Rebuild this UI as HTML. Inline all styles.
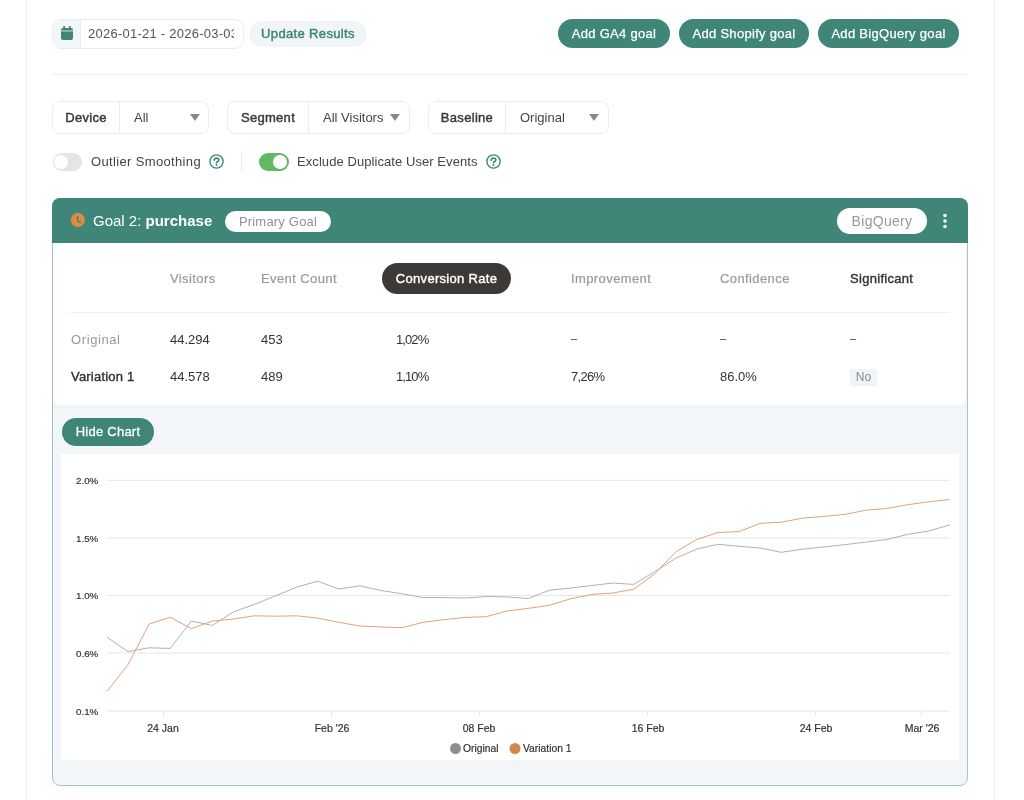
<!DOCTYPE html>
<html><head><meta charset="utf-8">
<style>
*{box-sizing:border-box;margin:0;padding:0}
html,body{width:1024px;height:800px;overflow:hidden;background:#fff;font-family:"Liberation Sans",sans-serif;color:#333}
.abs{position:absolute}
.frame{position:absolute;left:26px;top:-10px;width:969px;height:820px;border-left:1px solid #f0f0f0;border-right:1px solid #f0f0f0}
.dateg{left:52px;top:19px;width:192px;height:30px;border:1px solid #e9edf0;border-radius:9px;overflow:hidden;background:#fff}
.dateg .ic{position:absolute;left:0;top:0;width:28px;height:28px;background:#f3f6f9;border-right:1px solid #e9edf0}
.dateg .tx{position:absolute;left:35px;top:0;line-height:28px;font-size:13px;color:#555;white-space:nowrap;width:146px;overflow:hidden;letter-spacing:0.25px}
.upd{left:249px;top:21px;width:118px;height:26px;border-radius:13px;background:#f1f5f8;color:#3d8577;font-size:13px;-webkit-text-stroke:0.45px #3d8577;letter-spacing:0.35px;text-align:center;line-height:26px}
.btn{top:19px;height:29px;border-radius:15px;background:#3f8679;color:#fff;font-size:13px;text-align:center;line-height:29px;white-space:nowrap;letter-spacing:0.3px;-webkit-text-stroke:0.25px #fff}
.hr{left:52px;top:74px;width:916px;height:1px;background:#f1f1f1}
.sel{top:101px;height:33px;border:1px solid #eaecef;border-radius:8px}
.sel .lb{position:absolute;left:0;top:0;height:31px;line-height:31px;font-size:13px;-webkit-text-stroke:0.45px #3a3a3a;letter-spacing:0.3px;color:#3a3a3a;border-right:1px solid #eaecef;text-align:center}
.sel .vl{position:absolute;top:0;line-height:31px;font-size:13px;color:#444}
.sel .car{position:absolute;top:12px;width:0;height:0;border-left:5px solid transparent;border-right:5px solid transparent;border-top:7px solid #888}
.tog{top:153px;width:29.5px;height:17.5px;border-radius:9px}
.tog .k{position:absolute;top:1.75px;width:14px;height:14px;border-radius:7px;background:#fff}
.tl{top:153px;line-height:18px;font-size:13px;color:#444;white-space:nowrap}
.help{top:154px;width:15px;height:15px;border:1.5px solid #3f8679;border-radius:50%;color:#3f8679;font-size:10px;font-weight:bold;text-align:center;line-height:12px}
.card{left:52px;top:198px;width:916px;height:588px;border:1px solid #a3c8c1;border-radius:8px;background:#f3f6f9;overflow:hidden}
.hdr{left:52px;top:198px;width:916px;height:45px;background:#3f8679;border-radius:8px 8px 0 0}
.tbl{left:53px;top:243px;width:913px;height:162px;background:#fff;border-radius:0 0 8px 8px}
.th{top:271px;line-height:16px;font-size:13px;color:#999;white-space:nowrap;letter-spacing:0.4px;-webkit-text-stroke:0.2px #999}
.td{line-height:16px;font-size:13px;color:#333;white-space:nowrap}
.chart{left:61px;top:454px;width:898px;height:306px;background:#fff}
.yl{font-family:"Liberation Sans",sans-serif;font-size:9.8px;fill:#333;stroke:#333;stroke-width:0.2px}
.xl{font-family:"Liberation Sans",sans-serif;font-size:10.5px;fill:#333;stroke:#333;stroke-width:0.2px}
</style></head><body><div style="position:absolute;left:0;top:0;width:1024px;height:800px;will-change:transform">
<div class="frame"></div>

<div class="abs dateg"><div class="ic"><svg width="28" height="28" viewBox="1 0 28 28"><rect x="9" y="8" width="12" height="12" rx="2" fill="#3f8679"/><rect x="11.3" y="6" width="1.7" height="3" rx="0.6" fill="#3f8679"/><rect x="17" y="6" width="1.7" height="3" rx="0.6" fill="#3f8679"/><rect x="9" y="10.2" width="12" height="1.5" fill="#9cc3bb"/></svg></div><div class="tx">2026-01-21 - 2026-03-03</div></div>
<div class="abs upd">Update Results</div>
<div class="abs btn" style="left:558px;width:112px">Add GA4 goal</div>
<div class="abs btn" style="left:679px;width:130px">Add Shopify goal</div>
<div class="abs btn" style="left:818px;width:141px">Add BigQuery goal</div>
<div class="abs hr"></div>

<div class="abs sel" style="left:52px;width:157px"><div class="lb" style="width:67px">Device</div><div class="vl" style="left:81px">All</div><div class="car" style="left:137px"></div></div>
<div class="abs sel" style="left:227px;width:183px"><div class="lb" style="width:81px">Segment</div><div class="vl" style="left:95px">All Visitors</div><div class="car" style="left:162px"></div></div>
<div class="abs sel" style="left:428px;width:181px"><div class="lb" style="width:77px">Baseline</div><div class="vl" style="left:91px">Original</div><div class="car" style="left:160px"></div></div>

<div class="abs tog" style="left:52.5px;background:#e2e5e8"><div class="k" style="left:1.5px"></div></div>
<div class="abs tl" style="left:91px;letter-spacing:0.35px">Outlier Smoothing</div>
<svg class="abs" style="left:209.2px;top:153.5px" width="15" height="15" viewBox="0 0 15 15"><circle cx="7.5" cy="7.5" r="6.6" stroke="#3f8679" stroke-width="1.4" fill="none"/><path d="M5.2 6.1 Q5.4 4.2 7.5 4.2 Q9.8 4.2 9.8 6 Q9.8 7.3 7.5 8.2 V8.7" stroke="#3f8679" stroke-width="1.7" fill="none" stroke-linecap="round" stroke-linejoin="round"/><circle cx="7.5" cy="10.9" r="1" fill="#3f8679"/></svg>
<div class="abs" style="left:241px;top:151px;width:1px;height:21px;background:#eceef2"></div>
<div class="abs tog" style="left:259px;background:#62b865"><div class="k" style="left:14px"></div></div>
<div class="abs tl" style="left:297px;letter-spacing:0.07px">Exclude Duplicate User Events</div>
<svg class="abs" style="left:486.2px;top:153.5px" width="15" height="15" viewBox="0 0 15 15"><circle cx="7.5" cy="7.5" r="6.6" stroke="#3f8679" stroke-width="1.4" fill="none"/><path d="M5.2 6.1 Q5.4 4.2 7.5 4.2 Q9.8 4.2 9.8 6 Q9.8 7.3 7.5 8.2 V8.7" stroke="#3f8679" stroke-width="1.7" fill="none" stroke-linecap="round" stroke-linejoin="round"/><circle cx="7.5" cy="10.9" r="1" fill="#3f8679"/></svg>

<div class="abs card"></div>
<div class="abs hdr"></div>
<svg class="abs" style="left:70px;top:212px" width="16" height="16" viewBox="0 0 16 16"><circle cx="7.9" cy="8" r="7" fill="#e08b42"/><path d="M7.6 4.6 V8.8 L10.4 10.6" stroke="#3f8679" stroke-width="1.5" fill="none" stroke-linecap="round" stroke-linejoin="round"/></svg>
<div class="abs" style="left:93px;top:212px;line-height:18px;font-size:15px;color:#fff;white-space:nowrap">Goal 2: <b>purchase</b></div>
<div class="abs" style="left:225px;top:211.3px;width:106px;height:21.2px;border-radius:11px;background:#fff;color:#919191;font-size:13px;line-height:21.2px;text-align:center;letter-spacing:0.2px">Primary Goal</div>
<div class="abs" style="left:837px;top:208px;width:90px;height:26px;border-radius:13px;background:#fff;color:#999;font-size:14px;line-height:26px;text-align:center;letter-spacing:0.3px">BigQuery</div>
<svg class="abs" style="left:940px;top:212px" width="10" height="18"><circle cx="5" cy="3.5" r="1.8" fill="#fff"/><circle cx="5" cy="9" r="1.8" fill="#fff"/><circle cx="5" cy="14.5" r="1.8" fill="#fff"/></svg>

<div class="abs tbl"></div>
<div class="abs th" style="left:170px">Visitors</div>
<div class="abs th" style="left:261px">Event Count</div>
<div class="abs" style="left:382px;top:263px;width:129px;height:31px;border-radius:16px;background:#3d3937;color:#fff;font-size:13px;-webkit-text-stroke:0.4px #fff;letter-spacing:0.3px;text-align:center;line-height:31px">Conversion Rate</div>
<div class="abs th" style="left:571px">Improvement</div>
<div class="abs th" style="left:720px">Confidence</div>
<div class="abs th" style="left:850px;color:#333;-webkit-text-stroke:0.4px #333;letter-spacing:0.3px">Significant</div>
<div class="abs" style="left:70px;top:312px;width:880px;height:1px;background:#f0f0f0"></div>

<div class="abs td" style="left:71px;top:332px;color:#999;letter-spacing:0.6px">Original</div>
<div class="abs td" style="left:170px;top:332px">44.294</div>
<div class="abs td" style="left:261px;top:332px">453</div>
<div class="abs td" style="left:396px;top:332px;letter-spacing:-0.9px">1,02%</div>
<div class="abs td" style="left:571px;top:330px;font-size:11px">&#8211;</div>
<div class="abs td" style="left:720px;top:330px;font-size:11px">&#8211;</div>
<div class="abs td" style="left:850px;top:330px;font-size:11px">&#8211;</div>

<div class="abs td" style="left:71px;top:369px;-webkit-text-stroke:0.4px #333;letter-spacing:0.2px">Variation 1</div>
<div class="abs td" style="left:170px;top:369px">44.578</div>
<div class="abs td" style="left:261px;top:369px">489</div>
<div class="abs td" style="left:396px;top:369px;letter-spacing:-0.9px">1,10%</div>
<div class="abs td" style="left:571px;top:369px;letter-spacing:-0.7px">7,26%</div>
<div class="abs td" style="left:720px;top:369px">86.0%</div>
<div class="abs" style="left:850px;top:369px;width:27px;height:17px;background:#f1f4f7;color:#888;font-size:12px;line-height:17px;text-align:center">No</div>

<div class="abs" style="left:62px;top:418px;width:92px;height:28px;border-radius:14px;background:#3f8679;color:#fff;font-size:13px;line-height:28px;text-align:center;letter-spacing:0.25px;-webkit-text-stroke:0.3px #fff">Hide Chart</div>
<div class="abs chart"></div>

<svg class="abs" style="left:0;top:0" width="1024" height="800">
<g stroke="#e6e6e6" stroke-width="1">
<line x1="107" y1="480.3" x2="950" y2="480.3"/>
<line x1="107" y1="538" x2="950" y2="538"/>
<line x1="107" y1="595.5" x2="950" y2="595.5"/>
<line x1="107" y1="653" x2="950" y2="653"/>
<line x1="107" y1="711" x2="950" y2="711"/>
<line x1="163.5" y1="711" x2="163.5" y2="716"/>
<line x1="331.5" y1="711" x2="331.5" y2="716"/>
<line x1="479.5" y1="711" x2="479.5" y2="716"/>
<line x1="647.5" y1="711" x2="647.5" y2="716"/>
<line x1="815.5" y1="711" x2="815.5" y2="716"/>
<line x1="921.5" y1="711" x2="921.5" y2="716"/>
</g>
<g class="yl" text-anchor="start">
<text x="76" y="484">2.0%</text>
<text x="76" y="542">1.5%</text>
<text x="76" y="599">1.0%</text>
<text x="76" y="657">0.6%</text>
<text x="76" y="715">0.1%</text>
</g>
<g class="xl" text-anchor="middle">
<text x="163" y="732">24 Jan</text>
<text x="332" y="732">Feb '26</text>
<text x="479" y="732">08 Feb</text>
<text x="648" y="732">16 Feb</text>
<text x="816" y="732">24 Feb</text>
<text x="922" y="732">Mar '26</text>
</g>
<polyline fill="none" stroke="#b0b0b0" stroke-width="1" points="107.0,637.2 128.1,651.6 149.1,647.8 170.2,648.4 191.3,621.1 212.3,625.4 233.4,611.9 254.5,604.4 275.6,595.8 296.6,587.2 317.7,581.2 338.8,589.0 359.8,585.8 380.9,590.5 402.0,593.7 423.1,597.6 444.1,597.6 465.2,598.0 486.3,596.5 507.3,597.0 528.4,598.5 549.5,590.2 570.5,588.1 591.6,585.5 612.7,583.0 633.8,584.4 654.8,571.6 675.9,558.2 697.0,549.0 718.0,544.3 739.1,546.3 760.2,548.0 781.2,552.3 802.3,549.2 823.4,547.0 844.5,544.7 865.5,542.2 886.6,539.5 907.7,534.4 928.7,531.0 949.8,524.9"/>
<polyline fill="none" stroke="#dea27c" stroke-width="1" points="107.0,691.4 128.1,664.5 149.1,624.1 170.2,617.3 191.3,628.6 212.3,621.1 233.4,619.0 254.5,615.8 275.6,616.2 296.6,615.8 317.7,618.1 338.8,622.3 359.8,626.0 380.9,627.0 402.0,627.7 423.1,622.3 444.1,619.7 465.2,617.4 486.3,616.7 507.3,610.9 528.4,608.4 549.5,605.3 570.5,598.8 591.6,594.5 612.7,593.0 633.8,589.2 654.8,573.7 675.9,551.8 697.0,539.3 718.0,532.5 739.1,531.6 760.2,523.4 781.2,522.2 802.3,518.2 823.4,516.4 844.5,514.4 865.5,510.3 886.6,508.5 907.7,504.7 928.7,501.8 949.8,499.5"/>
<circle cx="455.5" cy="748.5" r="5.5" fill="#8f8f8f"/>
<text x="463" y="752" class="xl" style="font-size:10.3px">Original</text>
<circle cx="515" cy="748.5" r="5.5" fill="#d4874d"/>
<text x="523" y="752" class="xl" style="font-size:10.3px">Variation 1</text>
</svg>
</div></body></html>
